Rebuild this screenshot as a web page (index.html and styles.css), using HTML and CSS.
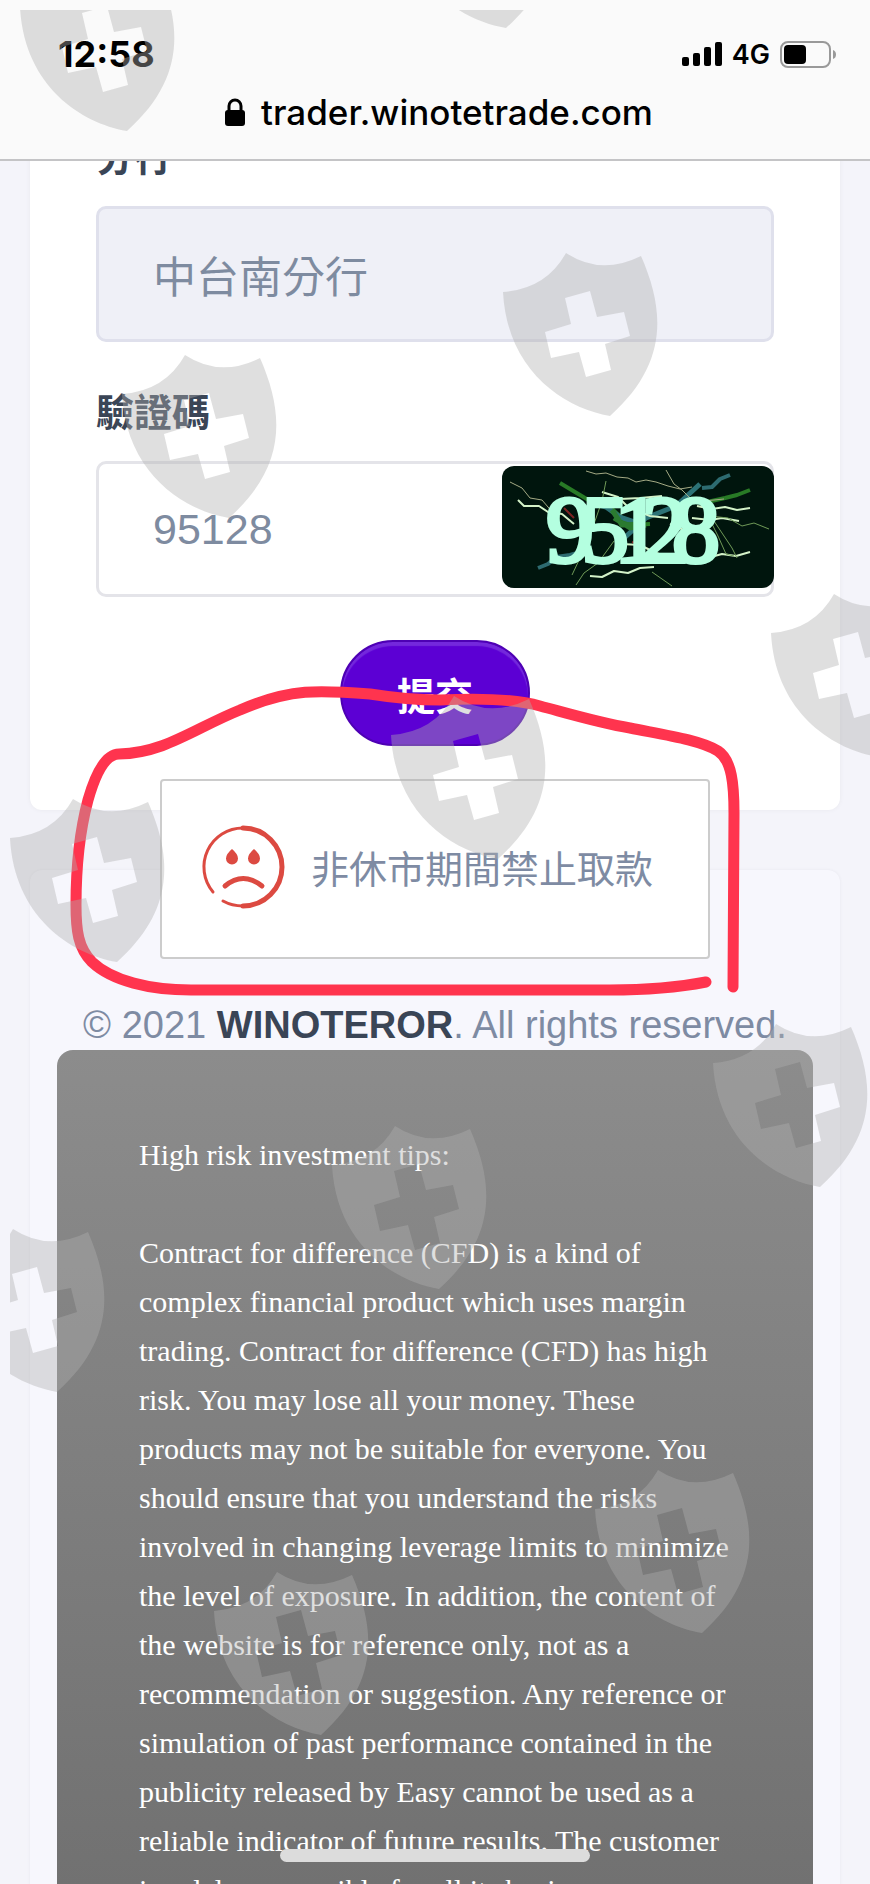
FILE: index.html
```html
<!DOCTYPE html>
<html lang="zh-Hant">
<head>
  <meta charset="UTF-8">
  <meta name="viewport" content="width=device-width, initial-scale=1.0">
  <title>trader.winotetrade.com</title>
  <link rel="stylesheet" href="styles.css">
</head>
<body>
  <header class="topbar">
    <div class="status">
      <span class="time">12:58</span>
      <div class="status-icons">
        <svg class="signal" viewBox="0 0 40 24" aria-hidden="true">
          <rect x="0" y="15" width="7" height="9" rx="2"/>
          <rect x="11" y="11" width="7" height="13" rx="2"/>
          <rect x="22" y="5" width="7" height="19" rx="2"/>
          <rect x="33" y="0" width="7" height="24" rx="2"/>
        </svg>
        <span class="network">4G</span>
        <svg class="battery" viewBox="0 0 57 27" aria-hidden="true">
          <rect x="1" y="1" width="49" height="25" rx="7" fill="none" stroke="#999" stroke-width="2"/>
          <rect x="4" y="4" width="22" height="19" rx="4"/>
          <path d="M53 9q3 1 3 4.500t-3 4.500z" fill="#999"/>
        </svg>
      </div>
    </div>
    <div class="address">
      <svg class="lock" viewBox="0 0 20 28" aria-hidden="true">
        <rect x="0" y="12" width="20" height="16" rx="3"/>
        <path d="M4 14V8a6 6 0 0 1 12 0v6" fill="none" stroke="#000" stroke-width="3"/>
      </svg>
      <span>trader.winotetrade.com</span>
    </div>
  </header>

  <main class="page">
    <form class="card">
      <label for="branch">分行</label>
      <input type="text" id="branch" value="中台南分行" readonly>
      <label for="code">驗證碼</label>
      <div class="code-field">
        <input type="text" id="code" value="95128">
        <svg class="captcha" viewBox="0 0 272 122" role="img" aria-label="95128">
          <rect width="272" height="122" fill="#00150d"/>
          <g fill="none" stroke-linejoin="round">
            <path d="M36 102l10-4 8-7 14-2 14-4M200 22l10-1 8-8 10-4" stroke="#2d6b70" stroke-width="4"/>
            <path d="M58 17l30 18 22 8 18 16 20 -1M205 36l18-4 12-3 13-5" stroke="#287a26" stroke-width="4"/>
            <path d="M88 36l16 5 14 10 18 6M120 74l24-22 30-12 24-22" stroke="#2c7276" stroke-width="5"/>
            <path d="M110 44l10 15 20-1M112 52l16 10 16-3" stroke="#2b7a30" stroke-width="5"/>
            <path d="M8 16l12 6 8 10 12 2 12 14M84 5l10 3 10-1 11 4 11 1 8 4 10-2 10 2 12 4 12 3 12-2M164 4l8 14 8 6 12 12 30 -3" stroke="#a4aa85" stroke-width="1"/>
            <path d="M16 34l6 6 15 0 9 6 14 2 12 10M100 26l16 5 10 10 16 1M118 33l20-1 22-2M195 40l15 3 13-2 12 3 13-2M190 52l18 2 12-2 17 3M88 110l12 1 12-6 14 2 12-5 14-1M120 78l18 1 14 7 13 5M205 92l15-4 14 2 14-4M128 42l20 8 18 2M168 58l14 6 20-2" stroke="#d3f2c8" stroke-width="2"/>
            <path d="M206 50l10 20 8 18 8 2M210 52l20 30 5 10M104 15l-4 20-14 40-16 34M74 119l8-12 14-10 16-22M150 106l20 14M208 50l18 2 14 8 12-3 15 6" stroke="#6f9a58" stroke-width="1"/>
            <path d="M130 76l12 3M160 90l12 4M62 42l10 10" stroke="#7c2222" stroke-width="2"/>
          </g>
          <text class="captcha-text" y="96" x="44 79 112 139 170">95128</text>
        </svg>
      </div>
      <button type="button" class="submit">提交</button>
    </form>

    <footer class="footer">
      <p class="copyright">© 2021 <strong>WINOTEROR</strong>. All rights reserved.</p>
      <div class="risk">
        <p>High risk investment tips:</p>
        <p>Contract for difference (CFD) is a kind of complex financial product which uses margin trading. Contract for difference (CFD) has high risk. You may lose all your money. These products may not be suitable for everyone. You should ensure that you understand the risks involved in changing leverage limits to minimize the level of exposure. In addition, the content of the website is for reference only, not as a recommendation or suggestion. Any reference or simulation of past performance contained in the publicity released by Easy cannot be used as a reliable indicator of future results. The customer is solely responsible for all its business</p>
      </div>
    </footer>
  </main>

  <div class="toast" role="alert">
    <svg class="sad" viewBox="0 0 84 84" fill="none" stroke="#dc4a41" stroke-linecap="round" aria-hidden="true">
      <path d="M12 67A39 39 0 0 1 42 3" stroke-width="3"/>
      <path d="M42 3A39 39 0 0 1 42 81" stroke-width="5"/>
      <path d="M42 81Q31 81 22 76" stroke-width="3"/>
      <path d="M24 61Q42 46 61 61" stroke-width="5"/>
      <path d="M31 24q-6 5-6 9.500a6 6 0 0 0 12 0q0-4.500-6-9.500zM53 24q-6 5-6 9.500a6 6 0 0 0 12 0q0-4.500-6-9.500z" fill="#dc4a41" stroke="none"/>
    </svg>
    <span>非休市期間禁止取款</span>
  </div>

  <div class="home-indicator"></div>

  <!-- marker line and shield watermarks over the page -->
  <svg class="marker" viewBox="0 0 870 1884" aria-hidden="true">
    <path d="M706 982C680 987 650 990 610 990H191C150 990 112 981 92 962C78 948 76 930 76 905C76 865 80 830 88 800C96 772 106 754 119 754C165 753 195 728 240 710C290 688 320 690 370 694C395 698 415 700 440 700C480 698 515 699 540 706C570 714 600 723 630 728C665 735 700 740 718 751C732 760 734 785 734 813L733 987"/>
  </svg>
  <svg class="watermark" viewBox="0 0 870 1884" aria-hidden="true">
    <defs>
      <clipPath id="edge"><rect x="10" y="10" width="860" height="1874"/></clipPath>
      <path id="shield" fill-rule="evenodd" d="M0 39Q43 36 63 0Q98 23 138 3C163 60 164 112 107 163C60 155 4 117 0 39ZM62 45L68 71 42 79 48 105 76 99 83 124 108 117 102 91 127 83 121 59 94 64 87 38Z"/>
    </defs>
    <g clip-path="url(#edge)">
      <use href="#shield" x="20" y="-32"/>
      <use href="#shield" x="399" y="-135"/>
      <use href="#shield" x="503" y="253"/>
      <use href="#shield" x="122" y="355"/>
      <use href="#shield" x="771" y="594"/>
      <use href="#shield" x="391" y="696"/>
      <use href="#shield" x="10" y="799"/>
      <use href="#shield" x="713" y="1024"/>
      <use href="#shield" x="332" y="1126"/>
      <use href="#shield" x="-50" y="1229"/>
      <use href="#shield" x="595" y="1470"/>
      <use href="#shield" x="214" y="1572"/>
    </g>
  </svg>
</body>
</html>
```
FILE: styles.css
```css
* {
  box-sizing: border-box;
}
body {
  position: relative;
  margin: 0;
  height: 100vh;
  overflow: hidden;
  background: #f4f4fa;
  color: #7e8ba3;
  font-family: "Liberation Sans", "Noto Sans CJK TC", sans-serif;
  font-size: 38px;
}
p {
  margin: 0;
}
.topbar {
  position: fixed;
  top: 0;
  left: 0;
  right: 0;
  z-index: 1;
  height: 161px;
  padding-top: 32px;
  background: #fafafa;
  border-bottom: 2px solid #c4c4c6;
  color: #000;
  font-family: Inter, sans-serif;
}
.status {
  display: flex;
  justify-content: space-between;
  align-items: center;
  height: 44px;
  padding: 0 33px 0 58px;
}
.time {
  font-size: 36px;
  font-weight: 700;
}
.status-icons {
  display: flex;
  align-items: center;
  gap: 10px;
}
.signal {
  width: 40px;
  height: 24px;
}
.network {
  font-size: 27px;
  font-weight: 600;
}
.battery {
  width: 57px;
  height: 27px;
}
.address {
  display: flex;
  justify-content: center;
  align-items: center;
  gap: 16px;
  height: 72px;
  padding-left: 8px;
  font-size: 35px;
  font-weight: 500;
}
.lock {
  width: 20px;
  height: 28px;
}
.page {
  padding: 0 30px;
}
.card {
  padding: 130px 66px 64px;
  background: #fff;
  border-radius: 0 0 12px 12px;
  box-shadow: 0 0 4px #e8e8ee;
}
label {
  display: block;
  margin-bottom: 20px;
  line-height: 56px;
  color: #3a4556;
  font-weight: bold;
}
input {
  display: block;
  width: 100%;
  height: 136px;
  margin-bottom: 43px;
  padding: 0 54px;
  border: 3px solid #e4e4e9;
  border-radius: 10px;
  background: #fff;
  color: #7e8ba0;
  font-family: inherit;
  font-size: 43px;
}
input[readonly] {
  background: #eff0f7;
  border-color: #dfe0ec;
}
.code-field {
  position: relative;
}
.captcha {
  position: absolute;
  top: 5px;
  right: 0;
  width: 272px;
  height: 122px;
  border-radius: 12px;
}
.captcha-text {
  fill: #b4ffe0;
  stroke: #b4ffe0;
  stroke-width: 4;
  font-family: "Liberation Serif", serif;
  font-size: 96px;
}
.submit {
  display: block;
  width: 190px;
  height: 106px;
  margin: 0 auto;
  border: 2px solid #4e00b4;
  border-radius: 53px;
  background: #5c00d4;
  box-shadow: inset 0 4px 1px #7428dc;
  color: #fff;
  font-family: inherit;
  font-size: 38px;
  font-weight: bold;
}
.footer {
  margin-top: 60px;
  padding: 131px 27px 0;
  background: #f7f7fd;
  border-radius: 12px;
  box-shadow: 0 0 3px #e6e6ee;
}
.copyright {
  line-height: 49px;
  text-align: center;
  white-space: nowrap;
}
.copyright strong {
  color: #3a4556;
}
.risk {
  padding: 80px 78px 80px 82px;
  border-radius: 16px;
  background: linear-gradient(#8c8c8c, #6c6c6c);
  color: #fff;
  font-family: "Liberation Serif", serif;
  font-size: 30px;
  line-height: 49px;
}
.risk p {
  margin-bottom: 49px;
}
.toast {
  position: fixed;
  top: 779px;
  left: 0;
  right: 0;
  display: flex;
  align-items: center;
  gap: 26px;
  width: fit-content;
  height: 180px;
  margin: 0 auto;
  padding: 0 55px 5px 39px;
  border: 2px solid #ccc;
  border-radius: 4px;
  background: #fff;
}
.sad {
  width: 84px;
  height: 84px;
}
.home-indicator {
  position: fixed;
  bottom: 22px;
  left: 0;
  right: 0;
  width: 310px;
  height: 13px;
  margin: 0 auto;
  border-radius: 7px;
  background: #dcdcdc;
}
.marker,
.watermark {
  position: absolute;
  top: 0;
  left: 0;
  z-index: 2;
  width: 100%;
  pointer-events: none;
}
.marker {
  fill: none;
  stroke: #ff344e;
  stroke-width: 11;
  stroke-linecap: round;
}
.watermark {
  fill: rgba(175, 175, 175, 0.4);
}
```
